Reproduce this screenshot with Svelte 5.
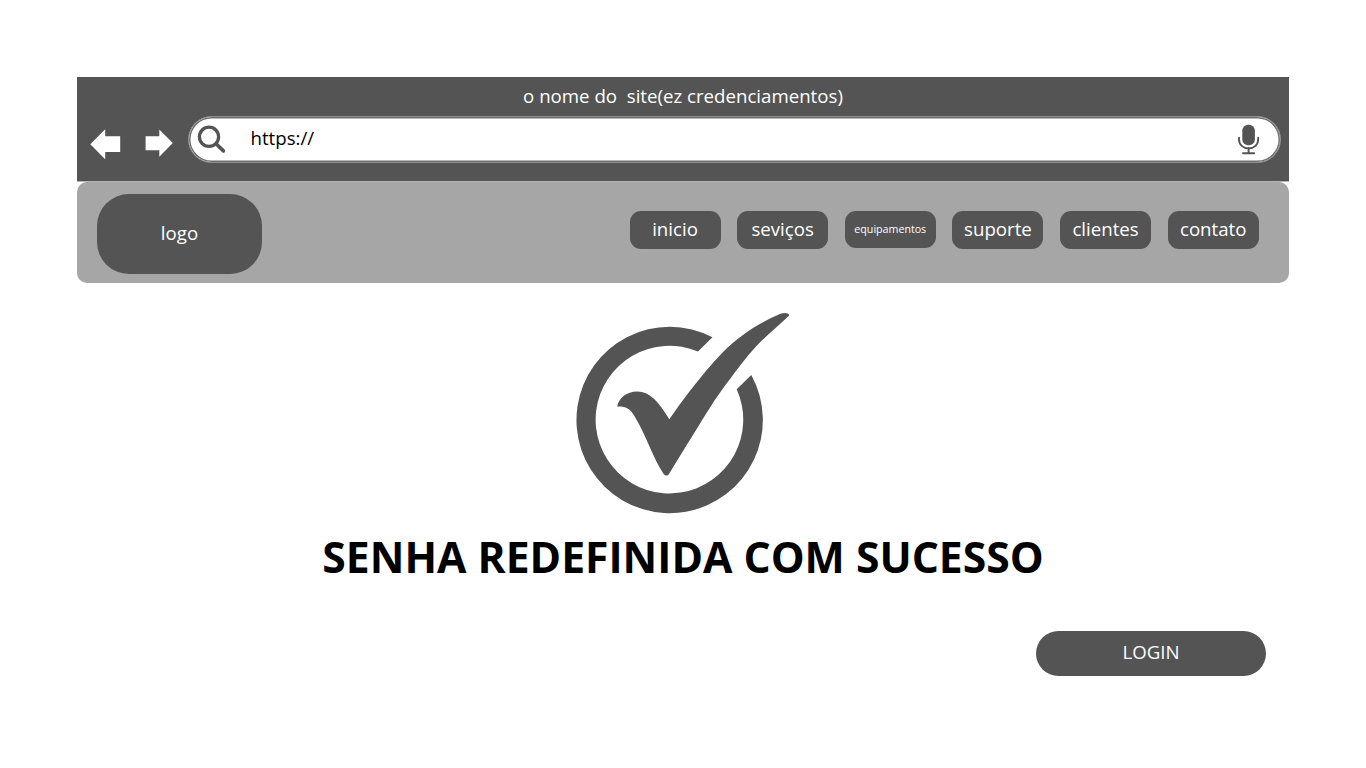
<script>
  const links = ['inicio', 'seviços', 'equipamentos', 'suporte', 'clientes', 'contato'];
</script>

<div class="page">
  <header class="browser">
    <div class="title">o nome do&nbsp; site(ez credenciamentos)</div>
    <div class="toolbar">
      <svg class="arrows" width="111" height="46" viewBox="77 116 111 46" aria-hidden="true">
        <path fill="#fff" d="M90.3 144.2 105.2 129.3V136.3H120.2V152H105.2V159.2ZM172.8 143 159.3 129.5V136.2H145.6V150.2H159.3V156.7Z" />
      </svg>
      <div class="address">
        <svg width="60" height="46" viewBox="190 116 60 46" fill="none" stroke="#545454" aria-hidden="true">
          <circle cx="209" cy="136.8" r="9.6" stroke-width="3.3" />
          <path d="m216.3 144 7.1 6.9" stroke-width="3.6" stroke-linecap="round" />
        </svg>
        <span class="url">https://</span>
        <svg width="44" height="46" viewBox="1236 116 44 46" fill="none" stroke="#545454" aria-hidden="true">
          <rect x="1242.3" y="124.8" width="12.6" height="20.4" rx="5.8" fill="#545454" stroke="none" />
          <path d="M1239 137.8v1.4c0 5.5 4 9.2 9.6 9.2s9.6-3.7 9.6-9.2v-1.4" stroke-width="1.9" stroke-linecap="round" />
          <path d="M1248.6 148v5M1243 153.2h11.2" stroke-width="1.9" stroke-linecap="round" />
        </svg>
      </div>
    </div>
  </header>

  <nav>
    <div class="logo">logo</div>
    <div class="links">
      {#each links as link}
        <div class="link" class:small={link.length > 10}>{link}</div>
      {/each}
    </div>
  </nav>

  <main>
    <svg class="check" width="216" height="202" viewBox="575 312 216 202" fill="#545454" aria-hidden="true">
      <path d="M712.5 337.2A93.2 93.2 0 1 0 751.3 375L736.7 389.3A73.8 73.8 0 1 1 698 351.6Z" />
      <path d="M617.2 406.5C618.5 398 627 391.4 637 391.4C650 391.4 658.5 401.5 669.3 419.3C676 409.5 683 400 690 390.7C701 377 712 363 723.3 351.7C740 335 758 323.5 780.5 313.8C785 312.3 788 313 789.5 315.2C779 325 767 335 756.7 345.7C744 359.5 733 375 723.3 388C719 394 715 399.5 711.7 405C703 418.5 698 427 669.3 473.5C667.5 476.3 665.3 476.2 663.3 473.5C653 458 646 435 635 417C629.5 407.5 625.5 406.3 617.2 406.5Z" />
    </svg>
    <h1>SENHA REDEFINIDA COM SUCESSO</h1>
    <button>LOGIN</button>
  </main>
</div>

<style>
  :global(body) {
    margin: 0;
    background: #fff;
  }
  .page {
    box-sizing: border-box;
    width: 1366px;
    height: 768px;
    padding: 77px 77px 0;
    overflow: hidden;
    font-family: 'Open Sans', sans-serif;
    font-size: 18.67px;
    line-height: 26px;
    color: #fff;
  }
  .browser {
    height: 104px;
    border-bottom: 1px solid #b4b4b4;
    background: #545454;
  }
  .title {
    height: 39px;
    line-height: 37px;
    text-align: center;
  }
  .toolbar {
    display: flex;
    height: 47px;
  }
  .arrows {
    flex: none;
  }
  .address {
    box-sizing: border-box;
    display: flex;
    width: 1093px;
    height: 47px;
    border: 1px solid #8c8c8c;
    border-radius: 24px;
    background: #fff;
    box-shadow: inset 0 0 0 1.5px #707070;
  }
  .address svg {
    flex: none;
    margin-top: -1px;
    margin-left: 1px;
  }
  .url {
    flex: 1;
    padding-left: 0.5px;
    line-height: 41px;
    color: #000;
  }
  nav {
    box-sizing: border-box;
    display: flex;
    justify-content: space-between;
    height: 101px;
    padding: 12px 30.3px 0 20px;
    border-radius: 10px;
    background: #a6a6a6;
  }
  .logo {
    width: 165px;
    height: 80px;
    border-radius: 32px;
    background: #545454;
    line-height: 77px;
    text-align: center;
  }
  .links {
    display: flex;
    gap: 16.65px;
    margin-top: 17px;
  }
  .link {
    width: 91px;
    height: 38px;
    border-radius: 11px;
    background: #545454;
    line-height: 35px;
    text-align: center;
  }
  .link.small {
    height: 37px;
    font-size: 10.67px;
    line-height: 37px;
  }
  main {
    display: flex;
    flex-direction: column;
    align-items: center;
  }
  .check {
    margin-top: 29px;
  }
  h1 {
    margin: 13px 0 0;
    font-size: 42.67px;
    line-height: 60px;
    font-weight: 700;
    white-space: nowrap;
    color: #000;
  }
  button {
    align-self: flex-end;
    width: 230px;
    height: 45px;
    margin: 44px 23px 0 0;
    padding: 0 0 3px;
    border: 0;
    border-radius: 22.5px;
    background: #545454;
    font: inherit;
    color: #fff;
  }
</style>
